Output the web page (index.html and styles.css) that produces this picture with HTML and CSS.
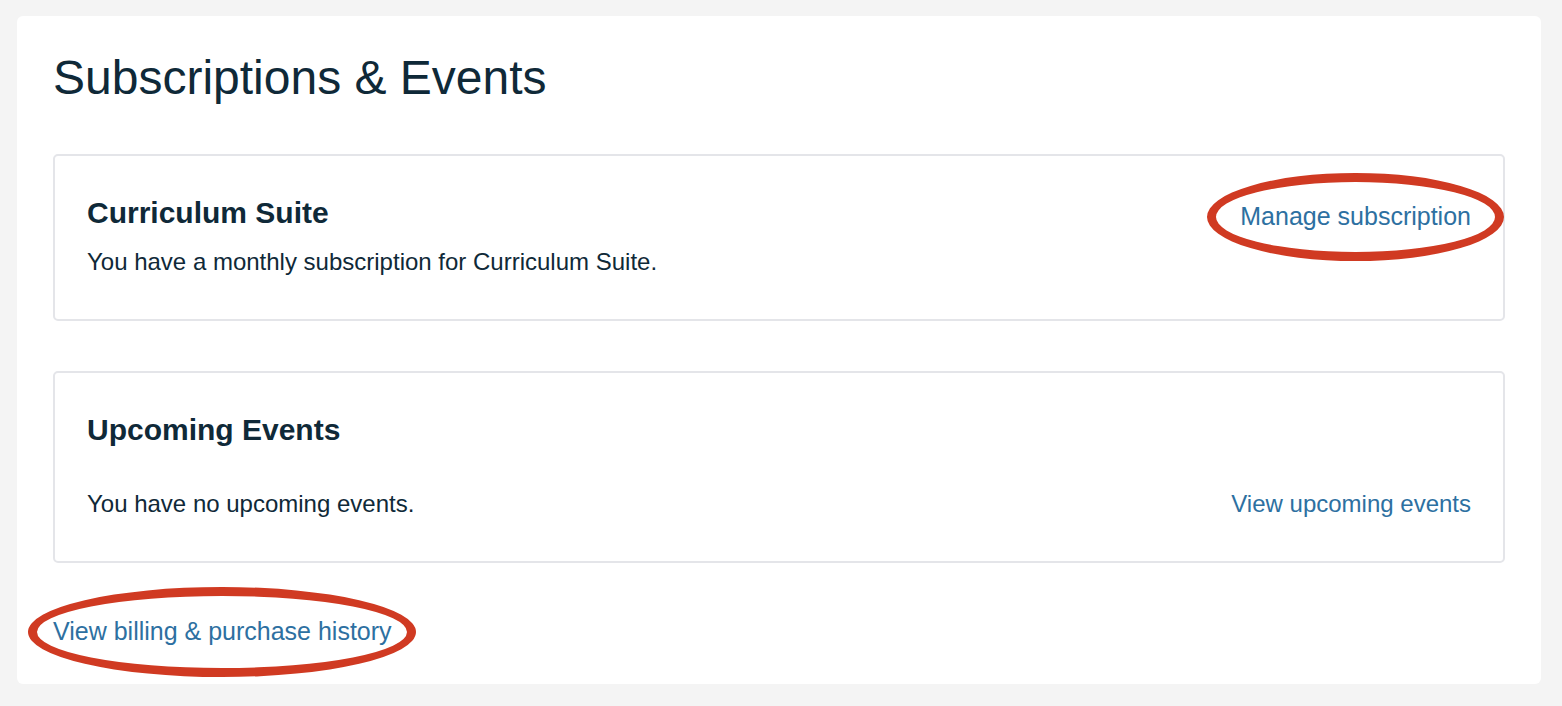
FILE: index.html
```html
<!DOCTYPE html>
<html lang="en">
<head>
<meta charset="utf-8">
<title>Subscriptions &amp; Events</title>
<link rel="stylesheet" href="styles.css">
</head>
<body>
  <main class="panel">
    <h1 class="title">Subscriptions &amp; Events</h1>

    <section class="card card-sub">
      <div class="card-head">
        <h2 class="card-title">Curriculum Suite</h2>
        <a class="link link-lg annotated" href="#">Manage subscription<span class="ring ring-manage"></span></a>
      </div>
      <p class="card-text">You have a monthly subscription for Curriculum Suite.</p>
    </section>

    <section class="card card-events">
      <h2 class="card-title">Upcoming Events</h2>
      <div class="card-row">
        <p class="card-text">You have no upcoming events.</p>
        <a class="link" href="#">View upcoming events</a>
      </div>
    </section>

    <div class="footer-links">
      <a class="link link-lg annotated" href="#">View billing &amp; purchase history<span class="ring ring-billing"></span></a>
    </div>
  </main>
</body>
</html>
```

FILE: styles.css
```css
* {
  box-sizing: border-box;
}

html, body {
  margin: 0;
}

body {
  background: #f4f4f4;
  padding: 16px 21px 22px 17px;
  font-family: "Liberation Sans", Arial, Helvetica, sans-serif;
  color: #0f2938;
}

.panel {
  background: #ffffff;
  border-radius: 6px;
  padding: 34px 36px 35px 36px;
}

.title {
  margin: 0 0 48px;
  font-size: 48px;
  line-height: 56px;
  font-weight: 400;
  color: #0f2938;
}

.card {
  border: 2px solid #e4e5e9;
  border-radius: 5px;
  padding: 39px 32px 39px 32px;
}

.card + .card {
  margin-top: 50px;
}

.card-head {
  display: flex;
  justify-content: space-between;
  align-items: flex-start;
}

.card-title {
  margin: 0;
  font-size: 30px;
  line-height: 36px;
  font-weight: 700;
  color: #0f2938;
}

.card-text {
  margin: 0;
  font-size: 24px;
  line-height: 36px;
  color: #0f2938;
}

.card-sub .card-text {
  margin-top: 13px;
}

.card-head .link {
  margin-top: 3px;
  margin-bottom: -3px;
}

.card-row {
  margin-top: 38px;
  display: flex;
  justify-content: space-between;
  align-items: baseline;
}

.link {
  font-size: 24px;
  line-height: 36px;
  color: #2d70a1;
  text-decoration: none;
}

.link-lg {
  font-size: 25px;
}

.annotated {
  position: relative;
  display: inline-block;
}

.ring {
  position: absolute;
  border: 9px solid #d03a22;
  border-radius: 50%;
  pointer-events: none;
}

.ring-manage {
  top: -25px;
  bottom: -27px;
  left: -33px;
  right: -33px;
}

.ring-billing {
  top: -26px;
  bottom: -28px;
  left: -25px;
  right: -24px;
}

.footer-links {
  display: flex;
  margin-top: 50px;
}
```
